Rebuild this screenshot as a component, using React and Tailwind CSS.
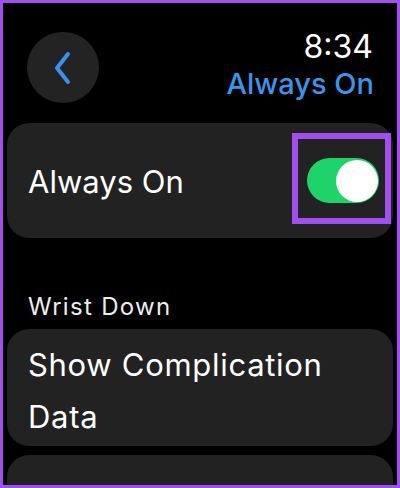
import React from 'react';

// Watch settings screen: Always On
export default function App() {
    const font = { fontFamily: 'Inter, "Noto Sans", sans-serif' };

    return (
        <div
            className="w-[400px] h-[488px] overflow-hidden bg-black border-[3px] border-[#a34ff0]"
            style={font}
        >
            <div className="px-[4px]">
                {/* Header */}
                <div className="flex items-start justify-between pl-[20px] pr-[19px] pt-[29px]">
                    <button className="w-[72px] h-[71px] rounded-full bg-[#232323] flex items-center justify-center">
                        <svg width="22" height="34" viewBox="0 0 22 34" fill="none">
                            <path
                                d="M16 3 L5 17 L16 31"
                                stroke="#3b91ee"
                                strokeWidth="4"
                                strokeLinecap="round"
                                strokeLinejoin="round"
                            />
                        </svg>
                    </button>
                    <div className="flex flex-col items-end">
                        <div className="text-white text-[32px] leading-[40px] mt-[-5px] mr-[1px]">8:34</div>
                        <div className="text-[#3895ee] text-[29px] leading-[34px] font-medium">Always On</div>
                    </div>
                </div>

                {/* Always On toggle row */}
                <div className="mt-[20px] h-[115px] rounded-[22px] bg-[#222222] flex items-center justify-between pl-[21px] pr-[2px]">
                    <span className="text-white text-[31px] mt-[3px]">Always On</span>
                    <div className="w-[99px] h-[91px] border-[6px] border-[#a34ff0] flex items-center justify-center mt-[-4px]">
                        <div className="w-[72px] h-[45px] rounded-full bg-[#1ed36a] flex items-center justify-end pr-[1px] ml-[3px] mt-[4px]">
                            <div className="w-[42px] h-[42px] rounded-full bg-white" />
                        </div>
                    </div>
                </div>

                {/* Wrist Down section */}
                <div className="text-[#ececec] text-[24px] leading-[30px] tracking-[1.3px] pl-[21px] mt-[54px]">Wrist Down</div>
                <div className="mt-[7px] h-[117px] rounded-[22px] bg-[#222222] pl-[21px] pt-[10px]">
                    <div className="text-white text-[31px] leading-[52px] tracking-[0.7px]">
                        Show Complication
                        <br />
                        Data
                    </div>
                </div>
                <div className="mt-[9px] h-[80px] rounded-[22px] bg-[#222222]" />
            </div>
        </div>
    );
}
